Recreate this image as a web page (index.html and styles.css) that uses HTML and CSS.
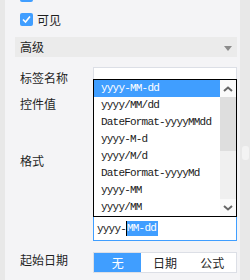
FILE: index.html
```html
<!DOCTYPE html>
<html lang="zh-CN">
<head>
    <meta charset="UTF-8">
    <meta name="viewport" content="width=device-width, initial-scale=1.0">
    <title>控件属性</title>
    <link rel="stylesheet" href="styles.css">
</head>
<body>
    <div class="page">
        <div class="edge"></div>

        <div class="panel">
            <div class="check-row">
                <span class="checkbox"><svg width="13" height="13" viewBox="0 0 13 13"><polyline points="3,6.5 5.5,9 10,3.5" fill="none" stroke="#fff" stroke-width="1.6"/></svg></span>
            </div>
            <div class="check-row">
                <span class="checkbox"><svg width="13" height="13" viewBox="0 0 13 13"><polyline points="3,6.5 5.5,9 10,3.5" fill="none" stroke="#fff" stroke-width="1.6"/></svg></span>
                <span class="check-label">可见</span>
            </div>

            <div class="section-head">
                <span>高级</span>
                <span class="caret"></span>
            </div>

            <div class="form">
                <div class="row row-name">
                    <label>标签名称</label>
                    <div class="input"></div>
                </div>
                <div class="row row-value">
                    <label>控件值</label>
                </div>
                <div class="row row-format">
                    <label>格式</label>
                </div>
                <div class="row row-format-input">
                    <label></label>
                    <div class="input focused">yyyy-<span class="caret-line"></span><span class="selected">MM-dd</span></div>
                </div>
                <div class="row row-start">
                    <label>起始日期</label>
                    <div class="segments">
                        <span class="seg active">无</span>
                        <span class="seg">日期</span>
                        <span class="seg">公式</span>
                    </div>
                </div>

                <!-- dropdown opened over the rows -->
                <div class="dropdown">
                    <ul class="options">
                        <li class="current">yyyy-MM-dd</li>
                        <li>yyyy/MM/dd</li>
                        <li>DateFormat-yyyyMMdd</li>
                        <li>yyyy-M-d</li>
                        <li>yyyy/M/d</li>
                        <li>DateFormat-yyyyMd</li>
                        <li>yyyy-MM</li>
                        <li>yyyy/MM</li>
                    </ul>
                    <div class="list-scroll">
                        <div class="arrow"><svg width="10" height="6" viewBox="0 0 10 6"><polyline points="1,5 5,1.5 9,5" fill="none" stroke="#666" stroke-width="2"/></svg></div>
                        <div class="track"><div class="thumb"></div></div>
                        <div class="arrow"><svg width="10" height="6" viewBox="0 0 10 6"><polyline points="1,1 5,4.5 9,1" fill="none" stroke="#666" stroke-width="2"/></svg></div>
                    </div>
                </div>
            </div>
        </div>

        <div class="page-scroll"><div class="page-thumb"></div></div>
    </div>
</body>
</html>
```

FILE: styles.css
```css
html, body {
    margin: 0;
    padding: 0;
    height: 100%;
    overflow: hidden;
}
body {
    background-color: #f4f4f6;
    font-family: "Noto Sans CJK SC", "Noto Sans", sans-serif;
    font-size: 12px;
    color: #1f1f1f;
}
.page {
    display: flex;
    height: 280px;
}
.edge {
    width: 5px;
    background-color: #e8e8e8;
}
.panel {
    width: 222px;
    padding: 0 3px 0 10px;
    margin-top: -17px;
}
.page-scroll {
    width: 10px;
    background-color: #e8e8e8;
    display: flex;
    flex-direction: column;
    align-items: center;
}
.page-thumb {
    width: 7px;
    height: 14px;
    margin-top: 146px;
    border-radius: 3px;
    background-color: #f3f3f3;
}

/* checkboxes */
.check-row {
    height: 24px;
    display: flex;
    align-items: flex-start;
    padding-left: 5px;
}
.checkbox {
    width: 13px;
    height: 13px;
    margin-top: 6px;
    background-color: #409eff;
    border-radius: 2px;
    display: flex;
}
.check-label {
    margin-left: 4px;
    line-height: 24px;
    margin-top: 1px;
}

/* collapsible header */
.section-head {
    margin-top: 6px;
    height: 20px;
    line-height: 20px;
    background-color: #ebebeb;
    padding-left: 5px;
    display: flex;
    justify-content: space-between;
    align-items: center;
}
.caret {
    width: 0;
    height: 0;
    border-left: 4.5px solid transparent;
    border-right: 4.5px solid transparent;
    border-top: 5px solid #8c8c8c;
    margin-right: 5px;
    margin-top: 2px;
}

/* form rows */
.form {
    position: relative;
    margin-top: 10px;
}
.row {
    display: flex;
    align-items: center;
}
.row label {
    width: 73px;
    padding-left: 5px;
    flex-shrink: 0;
}
.row-name { height: 24px; }
.row-name label { margin-top: -3px; }
.row-value { height: 24px; }
.row-format { height: 91px; }
.row-format-input {
    height: 25px;
    margin-top: 10px;
}
.row-start {
    height: 21px;
    margin-top: 11px;
}
.row-start label { margin-top: -6px; }

.input {
    flex: 1;
    height: 100%;
    box-sizing: border-box;
    background: #fff;
    border: 1px solid #dcdfe6;
    font-family: "Liberation Mono", monospace;
    font-size: 11px;
    letter-spacing: -0.8px;
    color: #1a1a1a;
    padding-left: 3px;
    display: flex;
    align-items: center;
}
.input.focused {
    border-color: #409eff;
}
.selected {
    background-color: #409eff;
    color: #fff;
    line-height: 15px;
    padding-right: 2px;
}
.caret-line {
    width: 1px;
    height: 15px;
    background-color: #000;
}

/* segmented switch */
.segments {
    flex: 1;
    height: 100%;
    display: flex;
    box-sizing: border-box;
    border: 1px solid #dcdfe6;
    background: #fff;
}
.seg {
    flex: 1;
    text-align: center;
    line-height: 19px;
    color: #1f1f1f;
}
.seg.active {
    background-color: #409eff;
    color: #fff;
}

/* opened dropdown list */
.dropdown {
    position: absolute;
    left: 78px;
    top: 12px;
    width: 144px;
    height: 138px;
    box-sizing: border-box;
    border: 1px solid #000;
    background: #fff;
    display: flex;
    z-index: 2;
}
.options {
    list-style: none;
    margin: 0;
    padding: 0;
    flex: 1;
}
.options li {
    height: 17px;
    line-height: 17px;
    padding-left: 7px;
    font-family: "Liberation Mono", monospace;
    font-size: 11px;
    letter-spacing: -0.8px;
    color: #1a1a1a;
    white-space: nowrap;
}
.options li.current {
    background-color: #409eff;
    color: #fff;
}
.list-scroll {
    width: 16px;
    display: flex;
    flex-direction: column;
    background: #f0f0f0;
}
.arrow {
    height: 17px;
    display: flex;
    align-items: center;
    justify-content: center;
    background: #fafafa;
}
.track {
    flex: 1;
}
.thumb {
    height: 54px;
    background-color: #dedede;
}
```
